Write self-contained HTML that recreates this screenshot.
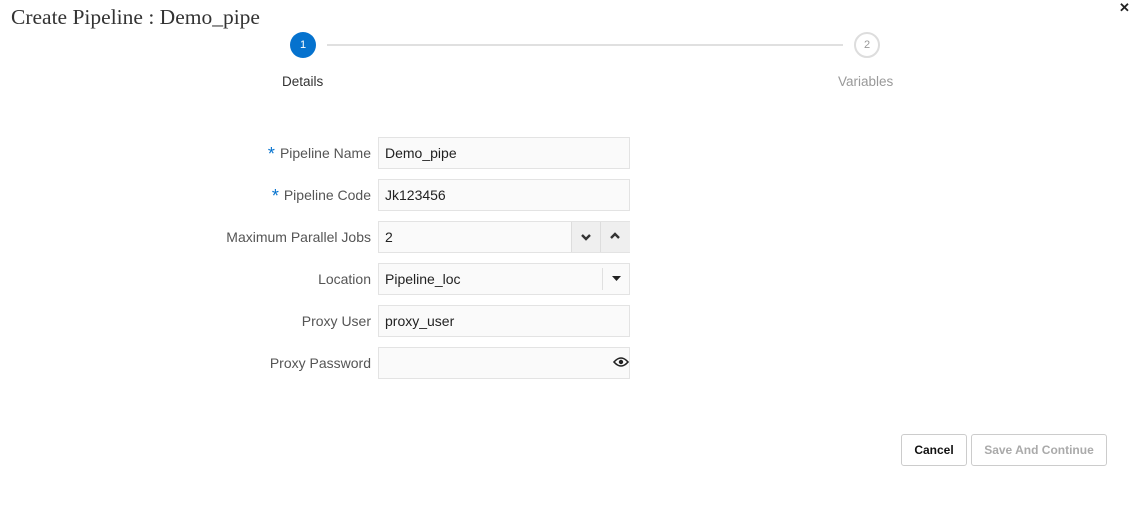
<!DOCTYPE html>
<html><head><style>
body{margin:0;width:1138px;height:532px;background:#fff;font-family:"Liberation Sans",sans-serif;position:relative;overflow:hidden}
.a{position:absolute}
.t{left:11px;top:5px;font-family:"Liberation Serif",serif;font-size:21.5px;color:#333}
.c{width:26px;height:26px;border-radius:50%;box-sizing:border-box;text-align:center;line-height:26px;font-size:11px}
.lbl{right:767px;font-size:14px;color:#555;text-align:right;line-height:32px}
.star{color:#0572ce;font-size:18px;vertical-align:-2px;margin-right:5px}
.f{left:378px;width:252px;height:32px;box-sizing:border-box;border:1px solid #e3e3e3;background:#fafafa;font-size:14px;color:#222;line-height:30px;padding-left:6px}
.btn{height:32px;box-sizing:border-box;border:1px solid #ccc;border-radius:3px;font-size:12px;font-weight:bold;line-height:30px;text-align:center;top:434px}
</style></head><body>
<div class="a t">Create Pipeline : Demo_pipe</div>
<div class="a" style="left:1119px;top:0;font-size:13px;font-weight:bold;color:#222">✕</div>
<div class="a c" style="left:290px;top:32px;background:#0572ce;color:#fff">1</div>
<div class="a" style="left:327px;top:44px;width:516px;height:2px;background:#e0e0e0"></div>
<div class="a c" style="left:854px;top:32px;border:2px solid #ddd;color:#999;line-height:22px">2</div>
<div class="a" style="left:282px;top:74px;font-size:13.5px;color:#333">Details</div>
<div class="a" style="left:838px;top:74px;font-size:13.5px;color:#999">Variables</div>

<div class="a lbl" style="top:137px"><span class="star">*</span>Pipeline Name</div>
<div class="a f" style="top:137px">Demo_pipe</div>
<div class="a lbl" style="top:179px"><span class="star">*</span>Pipeline Code</div>
<div class="a f" style="top:179px">Jk123456</div>
<div class="a lbl" style="top:221px">Maximum Parallel Jobs</div>
<div class="a f" style="top:221px">2</div>
<div class="a" style="left:571px;top:222px;width:58px;height:30px;background:#efefef;border-left:1px solid #ddd"></div>
<div class="a" style="left:600px;top:222px;width:1px;height:30px;background:#ddd"></div>
<svg class="a" style="left:579px;top:231px" width="14" height="12"><path d="M3 4l4 4 4-4" stroke="#333" stroke-width="2.4" fill="none"/></svg>
<svg class="a" style="left:608px;top:230px" width="14" height="12"><path d="M3 8l4-4 4 4" stroke="#333" stroke-width="2.4" fill="none"/></svg>
<div class="a lbl" style="top:263px">Location</div>
<div class="a f" style="top:263px">Pipeline_loc</div>
<div class="a" style="left:602px;top:268px;width:1px;height:22px;background:#e0e0e0"></div>
<svg class="a" style="left:611px;top:274px" width="12" height="10"><path d="M1 2h9l-4.5 5z" fill="#222"/></svg>
<div class="a lbl" style="top:305px">Proxy User</div>
<div class="a f" style="top:305px">proxy_user</div>
<div class="a lbl" style="top:347px">Proxy Password</div>
<div class="a f" style="top:347px"></div>
<svg class="a" style="left:613px;top:356px" width="16" height="12"><path d="M1 6Q8-2 15 6Q8 14 1 6z" stroke="#222" stroke-width="1.6" fill="none"/><circle cx="8" cy="6" r="2.2" fill="#222"/></svg>

<div class="a btn" style="left:901px;width:66px;color:#111">Cancel</div>
<div class="a btn" style="left:971px;width:136px;color:#aaa">Save And Continue</div>
</body></html>
